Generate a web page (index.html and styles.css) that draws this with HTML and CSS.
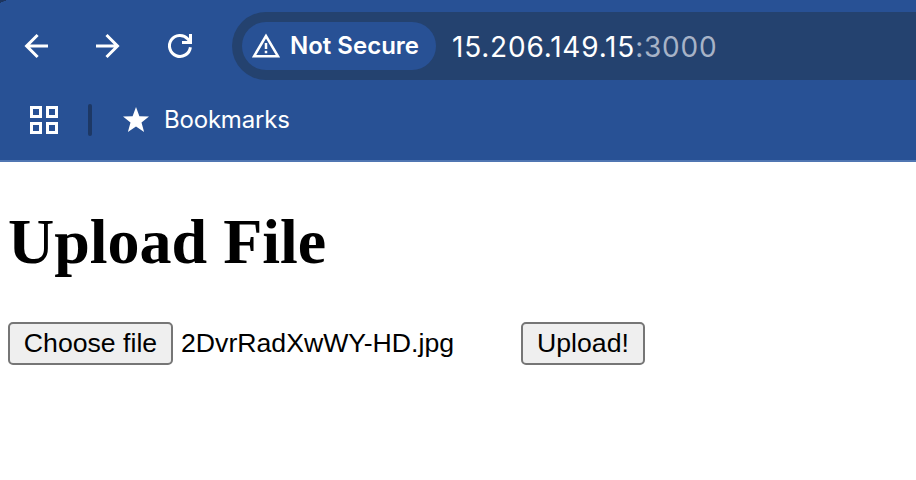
FILE: index.html
```html
<!DOCTYPE html>
<html lang="en">
<head>
<meta charset="utf-8">
<title>Upload File</title>
<link rel="stylesheet" href="styles.css">
</head>
<body>
<header class="browser">
  <div class="toolbar">
    <nav class="nav">
      <svg class="icon" viewBox="0 0 28 28"><path d="M26 14H4.5M15.6 3L4.6 14l11 11"/></svg>
      <svg class="icon" viewBox="0 0 28 28"><path d="M2 14h21.5M12.5 3l11 11-11 11"/></svg>
      <svg class="icon" viewBox="0 0 28 28"><path d="M24.4 15.2A10.5 10.5 0 1 1 21.8 6.9l2.4 2.8M24.5 2v8.6H16"/></svg>
    </nav>
    <div class="omnibox">
      <div class="chip">
        <svg class="warning" viewBox="0 0 28 26"><path d="M14 3L2 23.3h24z"/><path d="M14 10v6M14 17.8v2.5"/></svg>
        <span class="chip-text">Not Secure</span>
      </div>
      <div class="url">15.206.149.15<span class="port">:3000</span></div>
    </div>
  </div>
  <div class="bookmarks">
    <svg class="apps" viewBox="0 0 28 28"><path d="M1.5 1.5h9v9h-9zM17.5 1.5h9v9h-9zM1.5 17.5h9v9h-9zM17.5 17.5h9v9h-9z"/></svg>
    <span class="divider"></span>
    <svg class="star" viewBox="0 0 26 25"><path d="M13 0l3.4 9.2 9.6.4-7.5 6 2.6 9.3L13 19.5l-8.1 5.4 2.6-9.3-7.5-6 9.6-.4z"/></svg>
    <span class="bookmark-text">Bookmarks</span>
  </div>
</header>
<main class="page">
  <h1 class="title">Upload File</h1>
  <form class="form">
    <button class="button choose" type="button">Choose file</button>
    <span class="filename">2DvrRadXwWY-HD.jpg</span>
    <button class="button upload" type="button">Upload!</button>
  </form>
</main>
</body>
</html>
```
FILE: styles.css
```css
* { box-sizing: border-box; }
body {
  margin: 0;
  background: #fff;
  color: #000;
  overflow: hidden;
}
.browser {
  height: 162px;
  background: linear-gradient(to bottom right, #1d355f 49%, transparent 51%) 0 0 / 7px 3px no-repeat, #285195;
  border-bottom: 2px solid #5076b2;
  color: #fff;
  font-family: Inter, sans-serif;
}
.toolbar {
  display: flex;
  height: 92px;
  align-items: center;
  padding-left: 22px;
}
.nav {
  display: flex;
  gap: 44px;
  width: 210px;
}
.icon {
  width: 28px;
  height: 28px;
  fill: none;
  stroke: #fff;
  stroke-width: 3;
}
.omnibox {
  flex: 1;
  display: flex;
  align-items: center;
  height: 68px;
  padding-left: 10px;
  background: #24426f;
  border-radius: 34px 0 0 34px;
}
.chip {
  display: flex;
  align-items: center;
  width: 194px;
  height: 48px;
  padding-left: 10px;
  border-radius: 24px;
  background: #285195;
}
.warning {
  width: 28px;
  height: 26px;
  fill: none;
  stroke: #fff;
  stroke-width: 2.5;
}
.chip-text {
  margin-left: 10px;
  padding-bottom: 1px;
  font-size: 24px;
  font-weight: 600;
  white-space: nowrap;
}
.url {
  margin-left: 16px;
  padding-top: 1px;
  font-size: 28px;
  letter-spacing: .8px;
  white-space: nowrap;
}
.port { color: #a7b3c7; }
.bookmarks {
  display: flex;
  align-items: center;
  height: 56px;
  padding-left: 30px;
}
.apps {
  width: 28px;
  height: 28px;
  fill: none;
  stroke: #fff;
  stroke-width: 3;
}
.divider {
  width: 4px;
  height: 32px;
  margin-left: 30px;
  border-radius: 2px;
  background: #1d3865;
}
.star {
  width: 26px;
  height: 25px;
  margin-left: 31px;
  margin-bottom: 1px;
  fill: #fff;
}
.bookmark-text {
  margin-left: 15px;
  padding-bottom: 2px;
  font-size: 24px;
  letter-spacing: -.2px;
}
.page { padding: 43px 8px 0; }
.title {
  margin: 0 0 43px;
  font: bold 64px/74px "Liberation Serif", serif;
}
.form {
  display: flex;
  align-items: center;
  font: 26.667px/30px "Liberation Sans", sans-serif;
}
.button {
  height: 43px;
  padding: 0 0 2px;
  border: 2px solid #767676;
  border-radius: 5px;
  background: #efefef;
  color: #000;
  font: inherit;
  white-space: nowrap;
}
.choose { width: 165px; }
.filename {
  width: 340px;
  margin-left: 8px;
  padding-bottom: 2px;
}
.upload { width: 124px; }
```
